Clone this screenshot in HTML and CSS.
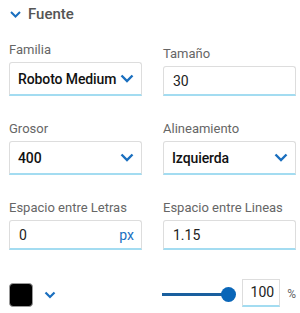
FILE: index.html
```html
<!DOCTYPE html>
<html lang="es">
<head>
    <meta charset="utf-8" />
    <title>Fuente</title>
    <link rel="stylesheet" href="styles.css">
</head>
<body>
    <div class="panel">
        <div class="sectionTitle">
            <svg class="titleChevron" width="11" height="7" viewBox="0 0 11 7"><path d="M1 1 L5.5 5.5 L10 1" fill="none" stroke="#1a6fbf" stroke-width="2"/></svg>
            <span>Fuente</span>
        </div>

        <div class="fieldGrid">
            <div class="field">
                <label>Familia</label>
                <div class="selectBox">
                    <span class="selectValue">Roboto Medium</span>
                    <svg class="chevron" width="14" height="9" viewBox="0 0 14 9"><path d="M1.5 1.5 L7 7 L12.5 1.5" fill="none" stroke="#1a6fbf" stroke-width="2.4"/></svg>
                </div>
            </div>
            <div class="field">
                <label>Tamaño</label>
                <div class="inputBox">
                    <span class="inputValue">30</span>
                </div>
            </div>

            <div class="field">
                <label>Grosor</label>
                <div class="selectBox">
                    <span class="selectValue">400</span>
                    <svg class="chevron" width="14" height="9" viewBox="0 0 14 9"><path d="M1.5 1.5 L7 7 L12.5 1.5" fill="none" stroke="#1a6fbf" stroke-width="2.4"/></svg>
                </div>
            </div>
            <div class="field">
                <label>Alineamiento</label>
                <div class="selectBox">
                    <span class="selectValue">Izquierda</span>
                    <svg class="chevron" width="14" height="9" viewBox="0 0 14 9"><path d="M1.5 1.5 L7 7 L12.5 1.5" fill="none" stroke="#1a6fbf" stroke-width="2.4"/></svg>
                </div>
            </div>

            <div class="field">
                <label>Espacio entre Letras</label>
                <div class="inputBox">
                    <span class="inputValue">0</span>
                    <span class="unit">px</span>
                </div>
            </div>
            <div class="field">
                <label>Espacio entre Lineas</label>
                <div class="inputBox">
                    <span class="inputValue">1.15</span>
                </div>
            </div>
        </div>

        <div class="colorRow">
            <div class="colorPicker">
                <div class="swatch"></div>
                <svg class="smallChevron" width="12" height="8" viewBox="0 0 12 8"><path d="M1.5 1.5 L6 6 L10.5 1.5" fill="none" stroke="#1a6fbf" stroke-width="2.2"/></svg>
            </div>
            <div class="opacity">
                <div class="slider">
                    <div class="track"></div>
                    <div class="thumb"></div>
                </div>
                <div class="percentBox">100</div>
                <span class="percentSign">%</span>
            </div>
        </div>
    </div>
</body>
</html>
```

FILE: styles.css
```css
body {
    margin: 0;
    font-family: Roboto, "Liberation Sans", sans-serif;
    background-color: #fff;
}
.panel {
    width: 300px;
    height: 313px;
    box-sizing: border-box;
    padding: 6px 4px 0 9px;
}
.sectionTitle {
    display: flex;
    align-items: center;
    height: 16px;
    font-size: 15px;
    font-weight: 500;
    color: #555;
}
.titleChevron {
    margin: 0 7px 0 1px;
}
.fieldGrid {
    display: grid;
    grid-template-columns: 133px 133px;
    column-gap: 21px;
    row-gap: 25px;
    align-items: end;
    margin-top: 20px;
}
.field {
    display: flex;
    flex-direction: column;
}
.field label {
    font-size: 13px;
    line-height: 16px;
    color: #666;
    margin-bottom: 4px;
}
.selectBox,
.inputBox {
    display: flex;
    align-items: center;
    box-sizing: border-box;
    border: 1px solid #ddd;
    border-bottom: 2px solid #a3dcf1;
    border-radius: 3px 3px 0 0;
    background-color: #fff;
}
.selectBox {
    height: 34px;
    padding: 0 7px 0 8px;
    justify-content: space-between;
}
.selectValue {
    font-size: 14px;
    font-weight: 500;
    letter-spacing: -0.1px;
    color: #111;
    white-space: nowrap;
}
.inputBox {
    height: 30px;
    padding: 0 7px 0 9px;
    justify-content: space-between;
}
.inputValue {
    font-size: 14px;
    color: #222;
}
.unit {
    font-size: 14px;
    color: #1a6fbf;
}
.colorRow {
    display: flex;
    align-items: center;
    justify-content: space-between;
    margin-top: 29px;
}
.colorPicker {
    display: flex;
    align-items: center;
}
.swatch {
    width: 24px;
    height: 24px;
    box-sizing: border-box;
    background-color: #000;
    border: 1px solid #999;
    border-radius: 4px;
    margin-top: 4px;
}
.smallChevron {
    margin-left: 11px;
    margin-top: 4px;
}
.opacity {
    display: flex;
    align-items: center;
}
.slider {
    position: relative;
    width: 74px;
    height: 16px;
    margin-right: 6px;
    margin-top: 2px;
}
.track {
    position: absolute;
    left: 0;
    right: 7px;
    top: 7px;
    height: 3px;
    background-color: #1a5f9e;
}
.thumb {
    position: absolute;
    right: 0;
    top: 1px;
    width: 15px;
    height: 15px;
    border-radius: 50%;
    background-color: #0a66b8;
}
.percentBox {
    width: 38px;
    height: 28px;
    box-sizing: border-box;
    border: 1px solid #ddd;
    border-bottom: 2px solid #a3dcf1;
    padding-right: 5px;
    text-align: right;
    font-size: 14px;
    line-height: 25px;
    color: #222;
}
.percentSign {
    font-size: 12px;
    color: #666;
    margin-left: 7px;
    margin-top: 2px;
}
```
